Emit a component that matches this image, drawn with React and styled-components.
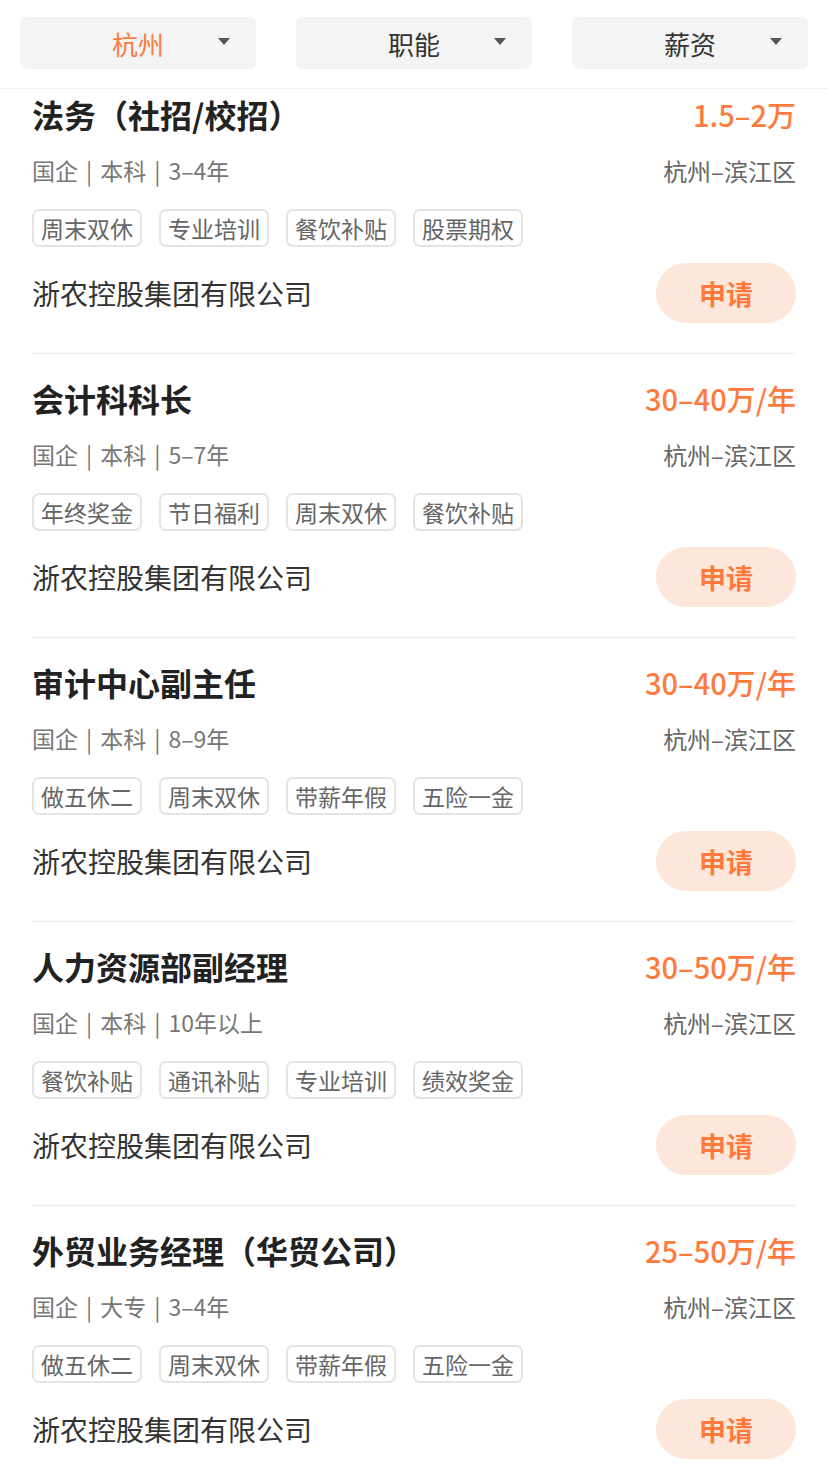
import styled, { createGlobalStyle } from "styled-components";

const GlobalStyle = createGlobalStyle`
  body {
    margin: 0;
    background: #fff;
    font-family: "Noto Sans CJK SC", "Noto Sans", sans-serif;
  }
  * {
    box-sizing: border-box;
  }
`;

const Page = styled.div`
  width: 828px;
  background: #fff;
`;

const FilterBar = styled.div`
  display: grid;
  grid-template-columns: repeat(3, 1fr);
  gap: 40px;
  padding: 17px 20px 19px;
  border-bottom: 1px solid #f0f0f0;
  background: #fff;
`;

const Filter = styled.div`
  position: relative;
  height: 52px;
  border-radius: 7px;
  background: #f4f4f4;
  display: flex;
  align-items: center;
  justify-content: center;
  font-size: 26px;
  color: ${(p) => (p.$active ? "#ff7a3d" : "#333")};
`;

const Caret = styled.span`
  position: absolute;
  right: 26px;
  top: 21px;
  width: 0;
  height: 0;
  border-left: 6px solid transparent;
  border-right: 6px solid transparent;
  border-top: 7px solid #555;
`;

const List = styled.div`
  padding: 0 32px;
`;

const Card = styled.div`
  padding: ${(p) => (p.$first ? "6px" : "25px")} 0 30px;
  border-bottom: 1px solid #ececec;
`;

const TopRow = styled.div`
  display: flex;
  justify-content: space-between;
  align-items: center;
  height: 38px;
`;

const Title = styled.div`
  font-size: 32px;
  font-weight: 700;
  color: #222;
  line-height: 38px;
`;

const Salary = styled.div`
  font-size: 29px;
  font-weight: 500;
  color: #ff7a3d;
  line-height: 38px;
`;

const MetaRow = styled.div`
  display: flex;
  justify-content: space-between;
  align-items: center;
  margin-top: 22px;
  height: 30px;
  font-size: 23px;
  color: #777;
`;

const Meta = styled.span`
  display: flex;
  align-items: center;
`;

const Pipe = styled.span`
  margin: 0 8px;
`;

const Location = styled.span`
  font-size: 24px;
  color: #666;
`;

const Tags = styled.div`
  display: flex;
  gap: 17px;
  margin-top: 24px;
`;

const Tag = styled.span`
  height: 38px;
  padding: 0 7px;
  border: 2px solid #e4e4e4;
  border-radius: 7px;
  display: flex;
  align-items: center;
  font-size: 23px;
  color: #666;
`;

const BottomRow = styled.div`
  display: flex;
  justify-content: space-between;
  align-items: center;
  margin-top: 16px;
`;

const Company = styled.div`
  font-size: 28px;
  color: #333;
`;

const ApplyButton = styled.button`
  width: 140px;
  height: 60px;
  border: none;
  border-radius: 30px;
  background: #fde6da;
  color: #ff7a3d;
  font-family: inherit;
  font-size: 27px;
  font-weight: 700;
  cursor: pointer;
`;

const jobs = [
  {
    title: "法务（社招/校招）",
    salary: "1.5–2万",
    meta: ["国企", "本科", "3–4年"],
    tags: ["周末双休", "专业培训", "餐饮补贴", "股票期权"],
  },
  {
    title: "会计科科长",
    salary: "30–40万/年",
    meta: ["国企", "本科", "5–7年"],
    tags: ["年终奖金", "节日福利", "周末双休", "餐饮补贴"],
  },
  {
    title: "审计中心副主任",
    salary: "30–40万/年",
    meta: ["国企", "本科", "8–9年"],
    tags: ["做五休二", "周末双休", "带薪年假", "五险一金"],
  },
  {
    title: "人力资源部副经理",
    salary: "30–50万/年",
    meta: ["国企", "本科", "10年以上"],
    tags: ["餐饮补贴", "通讯补贴", "专业培训", "绩效奖金"],
  },
  {
    title: "外贸业务经理（华贸公司）",
    salary: "25–50万/年",
    meta: ["国企", "大专", "3–4年"],
    tags: ["做五休二", "周末双休", "带薪年假", "五险一金"],
  },
];

const filters = [
  { label: "杭州", active: true },
  { label: "职能" },
  { label: "薪资" },
];

export default function App() {
  return (
    <Page>
      <GlobalStyle />
      <FilterBar>
        {filters.map((f) => (
          <Filter key={f.label} $active={f.active}>
            {f.label}
            <Caret />
          </Filter>
        ))}
      </FilterBar>
      <List>
        {jobs.map((job, i) => (
          <Card key={i} $first={i === 0}>
            <TopRow>
              <Title>{job.title}</Title>
              <Salary>{job.salary}</Salary>
            </TopRow>
            <MetaRow>
              <Meta>
                {job.meta.map((m, k) => (
                  <span key={k}>
                    {k > 0 && <Pipe>|</Pipe>}
                    {m}
                  </span>
                ))}
              </Meta>
              <Location>杭州–滨江区</Location>
            </MetaRow>
            <Tags>
              {job.tags.map((t) => (
                <Tag key={t}>{t}</Tag>
              ))}
            </Tags>
            <BottomRow>
              <Company>浙农控股集团有限公司</Company>
              <ApplyButton>申请</ApplyButton>
            </BottomRow>
          </Card>
        ))}
      </List>
    </Page>
  );
}
